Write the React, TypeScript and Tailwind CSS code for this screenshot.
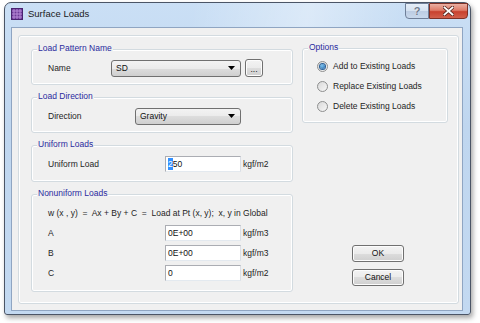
import React from "react";

function Group({ title, className, children }: { title: string; className: string; children?: React.ReactNode }) {
  return (
    <div className={"relative border border-[#d3dbe0] rounded-[3px] shadow-[inset_0_0_0_1px_#ffffff] " + className}>
      <span className="absolute left-[5px] top-[-8px] px-[1px] bg-[#f0f0f0] leading-[13px] text-[#2a2a9e]">{title}</span>
      {children}
    </div>
  );
}

function Arrow() {
  return (
    <svg width="7" height="4" viewBox="0 0 7 4" className="shrink-0">
      <path d="M0 0H7L3.5 4Z" fill="#000" />
    </svg>
  );
}

function Combo({ value, w }: { value: string; w: string }) {
  return (
    <div className={"h-[17px] border border-[#707070] rounded-[3px] bg-[linear-gradient(to_bottom,#f3f3f3_0%,#ebebeb_50%,#dddddd_50%,#cfcfcf_100%)] flex items-center pl-[4px] pr-[5px] " + w}>
      <span className="flex-1 text-[#111]">{value}</span>
      <Arrow />
    </div>
  );
}

function Input({ children }: { children: React.ReactNode }) {
  return (
    <div className="w-[76px] h-[16px] bg-white border border-[#abadb3] border-r-[#dbdfe6] border-b-[#e3e9ef] flex items-center pl-[2px] text-[#111]">
      {children}
    </div>
  );
}

function Btn({ label, className }: { label: string; className: string }) {
  return (
    <div className={"border border-[#707070] rounded-[3px] bg-[linear-gradient(to_bottom,#f3f3f3_0%,#ebebeb_50%,#dddddd_50%,#cfcfcf_100%)] shadow-[inset_0_0_0_1px_#fcfcfc] flex items-center justify-center text-[#111] " + className}>
      {label}
    </div>
  );
}

function Radio({ checked, label }: { checked?: boolean; label: string }) {
  return (
    <div className="flex items-center h-[20px]">
      <div className="w-[11px] h-[11px] rounded-full border border-[#8e8f8f] bg-[linear-gradient(135deg,#d9d9d9,#f7f7f7)] flex items-center justify-center">
        {checked && <div className="w-[5px] h-[5px] rounded-full bg-[radial-gradient(circle_at_40%_35%,#7cc4f2,#1f5e9e)] ring-1 ring-[#2a5f96]" />}
      </div>
      <span className="ml-[5px] text-[#1e1e1e]">{label}</span>
    </div>
  );
}

export default function App() {
  return (
    <div className="w-[480px] h-[323px] bg-white pt-[2px] pl-[4px] overflow-hidden font-['Liberation_Sans',Arial,sans-serif] text-[8.5px] text-[#1e1e1e]">
      <div className="w-[467px] h-[313px] border border-[#4b5566] rounded-t-[7px] rounded-b-[3px] bg-[linear-gradient(to_bottom,#cadff5,#bfd6ef_40%,#c3d9f1)] shadow-[2px_3px_5px_rgba(0,0,0,0.35)] flex flex-col">
        {/* Title bar */}
        <div className="h-[24px] flex items-start bg-[linear-gradient(100deg,rgba(255,255,255,0)_0%,rgba(255,255,255,0)_40%,rgba(255,255,255,0.35)_65%,rgba(255,255,255,0)_85%)] rounded-t-[6px]">
          <svg width="12" height="12" viewBox="0 0 12 12" className="ml-[6px] mt-[5px]">
            <rect x="0" y="0" width="12" height="12" fill="#6b3a96" />
            <path d="M0 3H12M0 6H12M0 9H12M3 0V12M6 0V12M9 0V12" stroke="#b88ad8" strokeWidth="1" />
            <rect x="0.5" y="0.5" width="11" height="11" fill="none" stroke="#4a2370" />
          </svg>
          <span className="ml-[5px] mt-[5px] text-[9.5px] leading-[12px] text-[#1a1a1a]">Surface Loads</span>
          <div className="flex-1" />
          <div className="w-[24px] h-[16px] border border-[#6f7f98] rounded-bl-[4px] bg-[linear-gradient(to_bottom,#e6eef8_0%,#d4e1f0_50%,#bccce2_50%,#c8d8ec_100%)] flex items-center justify-center">
            <span className="text-[11px] font-bold leading-[12px] text-[#6d7a8c] [text-shadow:0_0_1px_#fff]">?</span>
          </div>
          <div className="w-[39px] h-[16px] border border-[#7e3127] rounded-br-[4px] bg-[linear-gradient(to_bottom,#eab0a3_0%,#de7b68_45%,#c8412e_55%,#d2604c_100%)] flex items-center justify-center mr-[2px]">
            <svg width="11" height="10" viewBox="0 0 11 10">
              <path d="M1.5 1.5L9.5 8.5M9.5 1.5L1.5 8.5" stroke="#5a2a22" strokeWidth="3.6" strokeLinecap="square" />
              <path d="M1.5 1.5L9.5 8.5M9.5 1.5L1.5 8.5" stroke="#ffffff" strokeWidth="1.8" strokeLinecap="square" />
            </svg>
          </div>
        </div>
        {/* Client area */}
        <div className="ml-[6px] w-[452px] h-[284px] border border-[#8fa5c2] bg-[#f0f0f0]">
          <div className="ml-[6px] mt-[7px] w-[441px] h-[269px] border border-[#d3dbe0] rounded-[3px] shadow-[inset_0_0_0_1px_#ffffff] flex items-start pl-[12px]">
            {/* Left column */}
            <div className="mt-[13px] w-[262px] flex flex-col gap-[12px]">
              <Group title="Load Pattern Name" className="h-[36px] pt-[8px] pl-[16px]">
                <div className="flex items-center h-[20px]">
                  <span className="w-[63px]">Name</span>
                  <Combo value="SD" w="w-[130px]" />
                  <Btn label="..." className="ml-[4px] w-[18px] h-[18px] items-end pb-[3px] leading-[8px]" />
                </div>
              </Group>
              <Group title="Load Direction" className="h-[36px] pt-[8px] pl-[16px]">
                <div className="flex items-center h-[20px]">
                  <span className="w-[87px]">Direction</span>
                  <Combo value="Gravity" w="w-[106px]" />
                </div>
              </Group>
              <Group title="Uniform Loads" className="h-[37px] pt-[8px] pl-[16px]">
                <div className="flex items-center h-[20px]">
                  <span className="w-[117px]">Uniform Load</span>
                  <Input>
                    <span className="bg-[#3390ff] text-white">2</span>
                    <span>50</span>
                  </Input>
                  <span className="ml-[2px]">kgf/m2</span>
                </div>
              </Group>
              <Group title="Nonuniform Loads" className="h-[98px] pt-[8px] pl-[16px]">
                <div className="flex items-center h-[20px] whitespace-pre">
                  w (x , y)  =  Ax + By + C  =  Load at Pt (x, y);  x, y in Global
                </div>
                <div className="flex items-center h-[20px]">
                  <span className="w-[117px]">A</span>
                  <Input>0E+00</Input>
                  <span className="ml-[2px]">kgf/m3</span>
                </div>
                <div className="flex items-center h-[20px]">
                  <span className="w-[117px]">B</span>
                  <Input>0E+00</Input>
                  <span className="ml-[2px]">kgf/m3</span>
                </div>
                <div className="flex items-center h-[20px]">
                  <span className="w-[117px]">C</span>
                  <Input>0</Input>
                  <span className="ml-[2px]">kgf/m2</span>
                </div>
              </Group>
            </div>
            {/* Right column */}
            <div className="mt-[12px] ml-[9px] w-[146px] flex flex-col">
              <Group title="Options" className="h-[75px] pt-[7px] pl-[14px]">
                <Radio checked label="Add to Existing Loads" />
                <Radio label="Replace Existing Loads" />
                <Radio label="Delete Existing Loads" />
              </Group>
              <Btn label="OK" className="mt-[122px] ml-[50px] w-[52px] h-[17px]" />
              <Btn label="Cancel" className="mt-[7px] ml-[50px] w-[52px] h-[17px]" />
            </div>
          </div>
        </div>
      </div>
    </div>
  );
}
